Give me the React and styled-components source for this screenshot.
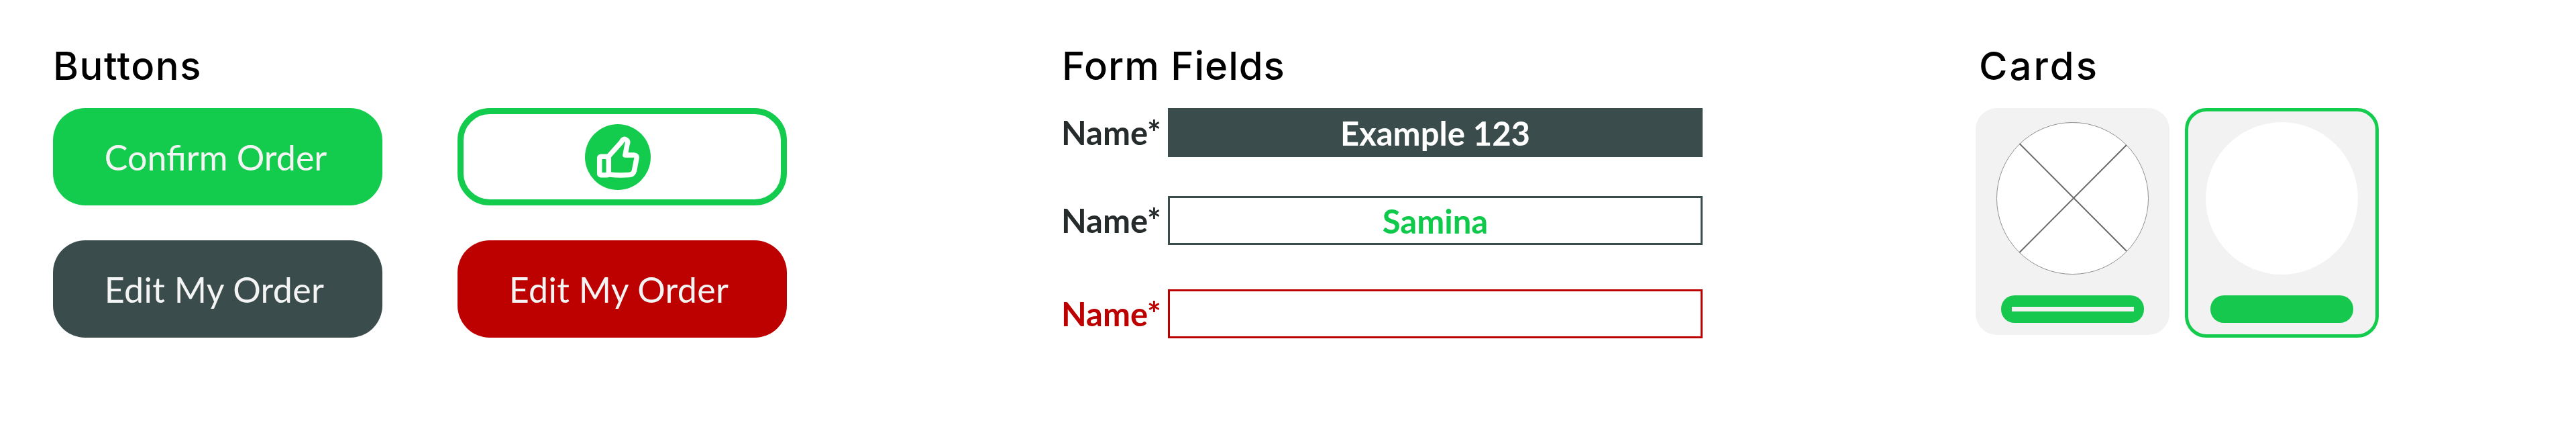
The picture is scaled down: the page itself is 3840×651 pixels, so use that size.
import React from 'react';
import styled, { createGlobalStyle } from 'styled-components';

const GREEN = '#13cb4c';
const SLATE = '#3a4c4b';
const RED = '#bd0000';

const GlobalStyle = createGlobalStyle`
  html, body {
    margin: 0;
    background: #fff;
  }
`;

const Page = styled.div`
  display: flex;
  width: 3840px;
  height: 651px;
  box-sizing: border-box;
  padding: 68px 0 0 79px;
`;
const Section = styled.section`
  width: ${props => props.$width}px;
  flex: none;
`;
const Heading = styled.h2`
  margin: 0 0 33px;
  padding-left: ${props => props.$indent || 0}px;
  font-family: Inter, 'Liberation Sans', sans-serif;
  font-size: 58px;
  font-weight: 500;
  line-height: 60px;
  letter-spacing: ${props => props.$spacing || 1.5}px;
  color: #000;
`;

const ButtonGrid = styled.div`
  display: grid;
  grid-template-columns: 491px 491px;
  grid-auto-rows: 145px;
  column-gap: 112px;
  row-gap: 52px;
`;
const Button = styled.button`
  display: flex;
  align-items: center;
  justify-content: center;
  padding: 0 ${props => props.$nudge || 6}px 0 0;
  box-sizing: border-box;
  border: ${props => (props.$outline ? `9px solid ${GREEN}` : 'none')};
  border-radius: 48px;
  background: ${props => (props.$outline ? '#fff' : props.$color)};
  color: #f4f4f4;
  font-family: Lato, sans-serif;
  font-size: 52px;
  font-weight: 400;
  letter-spacing: ${props => props.$spacing || 0}px;
`;
const ThumbWrap = styled.span`
  display: flex;
  margin-right: 7px;
`;

const FieldRow = styled.div`
  display: flex;
  align-items: center;
  height: 73px;
  margin-bottom: ${props => props.$gap || 0}px;
`;
const Label = styled.span`
  width: 158px;
  flex: none;
  margin: -2px 1px 0 -1px;
  font-family: Lato, sans-serif;
  font-size: 49px;
  font-weight: 700;
  color: ${props => props.$color || '#262b2b'};
`;
const Field = styled.div`
  display: flex;
  align-items: center;
  justify-content: center;
  width: 797px;
  height: 73px;
  box-sizing: border-box;
  border: 3px solid ${props => props.$border};
  background: ${props => props.$fill || '#fff'};
  color: ${props => props.$color || '#fff'};
  font-family: Lato, sans-serif;
  font-size: 49px;
  font-weight: 700;
`;

const CardRow = styled.div`
  display: flex;
  align-items: flex-start;
  gap: 23px;
`;
const Card = styled.div`
  display: flex;
  flex-direction: column;
  align-items: center;
  width: 289px;
  height: ${props => (props.$selected ? 342 : 338)}px;
  box-sizing: border-box;
  padding-top: ${props => (props.$selected ? 16 : 21)}px;
  border: ${props => (props.$selected ? `5px solid ${GREEN}` : 'none')};
  border-radius: 32px;
  background: #f2f2f2;
`;
const Photo = styled.div`
  position: relative;
  flex: none;
  width: 227px;
  height: 227px;
  box-sizing: border-box;
  border-radius: 50%;
  border: ${props => (props.$placeholder ? '1.5px solid #8f8f8f' : 'none')};
  background: #fff;
`;
const Cross = styled.svg`
  position: absolute;
  inset: -1.5px;
  width: 227px;
  height: 227px;
`;
const CardButton = styled.div`
  display: flex;
  align-items: center;
  justify-content: center;
  width: 213px;
  height: 41px;
  margin-top: 31px;
  border-radius: 20px;
  background: #16c94e;
`;
const CardButtonBar = styled.div`
  width: 182px;
  height: 7px;
  background: #f2f2f2;
`;

function ThumbIcon() {
  return (
    <svg width="98" height="98" viewBox="0 0 98 98">
      <circle cx="49" cy="49" r="49" fill={GREEN} />
      <g fill="none" stroke="#fff" strokeWidth="7.5" strokeLinejoin="round" strokeLinecap="round">
        <rect x="21.7" y="48.3" width="13.6" height="27.5" rx="2" />
        <path d="M36 47 L54 27 Q57 21 61 23 Q65 25 63 30 L60 46 L73 46 Q78 46 77 51 L73.5 69 Q72 75 66 75.5 Q50 76.5 37 75" />
      </g>
    </svg>
  );
}

export default function App() {
  return (
    <Page>
      <GlobalStyle />
      <Section $width={1504}>
        <Heading>Buttons</Heading>
        <ButtonGrid>
          <Button $color={GREEN}>Confirm Order</Button>
          <Button $outline>
            <ThumbWrap>
              <ThumbIcon />
            </ThumbWrap>
          </Button>
          <Button $color={SLATE} $nudge={10} $spacing={0.3}>Edit My Order</Button>
          <Button $color={RED} $nudge={10} $spacing={0.3}>Edit My Order</Button>
        </ButtonGrid>
      </Section>
      <Section $width={1362}>
        <Heading $spacing={1}>Form Fields</Heading>
        <FieldRow $gap={58}>
          <Label>Name*</Label>
          <Field $border={SLATE} $fill={SLATE}>Example 123</Field>
        </FieldRow>
        <FieldRow $gap={66}>
          <Label>Name*</Label>
          <Field $border={SLATE} $color="#0fc94a">Samina</Field>
        </FieldRow>
        <FieldRow>
          <Label $color={RED}>Name*</Label>
          <Field $border={RED} />
        </FieldRow>
      </Section>
      <Section $width={620}>
        <Heading $indent={5} $spacing={3}>Cards</Heading>
        <CardRow>
          <Card>
            <Photo $placeholder>
              <Cross viewBox="0 0 227 227">
                <path d="M34.5 32 L194 192 M194 34 L34.5 194" stroke="#6b6b6b" strokeWidth="2" />
              </Cross>
            </Photo>
            <CardButton>
              <CardButtonBar />
            </CardButton>
          </Card>
          <Card $selected>
            <Photo />
            <CardButton />
          </Card>
        </CardRow>
      </Section>
    </Page>
  );
}
